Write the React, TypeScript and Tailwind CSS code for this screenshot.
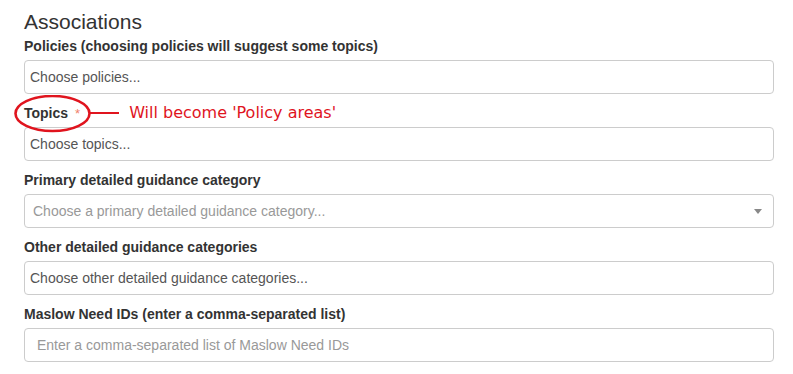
import React from "react";

const labelCls = "block text-[14px] font-bold leading-[20px] text-[#333] mb-[4px]";
const inputCls =
  "h-[34px] w-full rounded-[4px] border border-[#ccc] bg-white flex items-center text-[14px] mb-[9px]";

export default function App() {
  return (
    <div
      className="w-[793px] h-[374px] bg-white pl-[24px] pr-[19px] pt-[8px] overflow-hidden"
      style={{ fontFamily: '"Liberation Sans", Arial, sans-serif' }}
    >
      <h2 className="text-[21px] leading-[27px] text-[#333] font-normal mb-[1px]">Associations</h2>

      <label className={labelCls}>Policies (choosing policies will suggest some topics)</label>
      <div className={`${inputCls} pl-[5px] text-[#555]`}>Choose policies...</div>

      <div className="relative flex items-center h-[20px] mb-[4px]">
        <svg
          className="absolute left-[-11px] top-[-8px] pointer-events-none"
          width="80"
          height="40"
          viewBox="0 0 80 40"
        >
          <ellipse cx="39.5" cy="18.5" rx="37" ry="17.5" fill="none" stroke="#e0141e" strokeWidth="2.6" />
        </svg>
        <span className="text-[14px] font-bold text-[#333]">Topics</span>
        <span className="ml-[7px] text-[13px] text-[#f0806a] self-start mt-[1px]">*</span>
        <span className="ml-[9px] w-[30px] h-[2.5px] bg-[#e0141e]" />
        <span
          className="ml-[10px] text-[16px] leading-[20px] text-[#e0141e] whitespace-nowrap"
          style={{ fontFamily: '"DejaVu Sans", Verdana, sans-serif' }}
        >
          Will become 'Policy areas'
        </span>
      </div>
      <div className={`${inputCls} pl-[5px] text-[#555]`}>Choose topics...</div>

      <label className={labelCls}>Primary detailed guidance category</label>
      <div className={`${inputCls} pl-[8px] pr-[11px] justify-between text-[#999]`}>
        <span>Choose a primary detailed guidance category...</span>
        <span className="w-0 h-0 border-x-[4px] border-x-transparent border-t-[5px] border-t-[#888]" />
      </div>

      <label className={labelCls}>Other detailed guidance categories</label>
      <div className={`${inputCls} pl-[5px] text-[#555]`}>Choose other detailed guidance categories...</div>

      <label className={labelCls}>Maslow Need IDs (enter a comma-separated list)</label>
      <div className={`${inputCls} pl-[12px] text-[#999]`}>Enter a comma-separated list of Maslow Need IDs</div>
    </div>
  );
}
